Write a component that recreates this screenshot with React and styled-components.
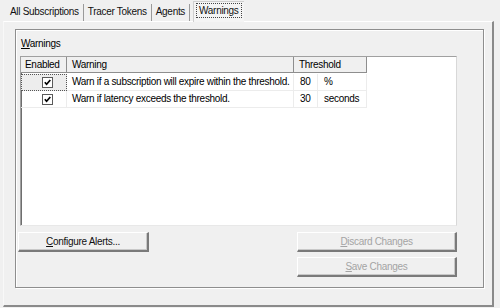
import React from 'react'
import styled, { createGlobalStyle } from 'styled-components'

const GlobalStyle = createGlobalStyle`
  html, body {
    margin: 0;
    padding: 0;
    background: #f0f0f0;
  }
  body {
    font-family: "Liberation Sans", Arial, sans-serif;
    font-size: 10px;
    letter-spacing: -0.3px;
    color: #000;
  }
`;

const Window = styled.div`
  width: 500px;
  height: 308px;
  box-sizing: border-box;
  padding: 4px 6px 5px 3px;
  display: flex;
  flex-direction: column;
  background: #f0f0f0;
  overflow: hidden;
`;

const TabStrip = styled.div`
  display: flex;
  align-items: flex-end;
  height: 18px;
  padding-left: 3px;
`;

const Tab = styled.div`
  height: 17px;
  line-height: 15px;
  padding: 0 4px;
  position: relative;
  color: #111;
  border-right: 1px solid #9a9a9a;
  margin-bottom: 1px;

  &:last-child { border-right: none; }

  ${props => props.active && `
    height: 19px;
    margin-bottom: 0;
    margin-left: 3px;
    padding: 1px 3px 0;
    background: #f4f4f4;
    border: 1px solid #cfcfcf;
    border-right: 2px solid #8a8a8a;
    border-bottom: none;
    z-index: 1;
  `}
`;

const Focus = styled.span`
  display: inline-block;
  padding: 0 2px;
  line-height: 13px;
  outline: 1px dotted #444;
  outline-offset: 0;
`;

const TabPanel = styled.div`
  flex: 1;
  margin-top: -1px;
  border-top: 1px solid #ffffff;
  border-left: 1px solid #f8f8f8;
  border-right: 2px solid #8a8a8a;
  border-bottom: 2px solid #8a8a8a;
  padding: 7px 8px 17px 11px;
  display: flex;
`;

const GroupBox = styled.div`
  flex: 1;
  border: 1px solid #8e8e8e;
  box-shadow: inset 1px 1px 0 #ffffff, 1px 1px 0 #ffffff;
  padding: 7px 26px 10px 4px;
  display: flex;
  flex-direction: column;
`;

const GroupLabel = styled.div`
  height: 15px;
  line-height: 14px;
  margin-left: 1px;
  margin-bottom: 4px;
`;

const U = styled.span`
  text-decoration: underline;
  text-underline-offset: 1px;
`;

const Grid = styled.div`
  height: 168px;
  background: #ffffff;
  border: 1px solid #a0a0a0;
  border-right-color: #d8d8d8;
  border-bottom-color: #e8e8e8;
  box-shadow: inset 1px 1px 0 #6e6e6e;
  display: grid;
  grid-template-columns: 46px 227px 24px 49px 1fr;
  grid-auto-rows: 17px;
  align-content: start;
`;

const HeadCell = styled.div`
  height: 15px;
  line-height: 15px;
  padding-left: ${props => props.pad || 5}px;
  background: ${props => props.blank ? '#ffffff' : '#f0f0f0'};
  border-right: ${props => props.blank ? 'none' : '1px solid #8e8e8e'};
  border-bottom: ${props => props.blank ? 'none' : '1px solid #8e8e8e'};
  grid-column: ${props => props.span ? `span ${props.span}` : 'auto'};
  white-space: nowrap;
`;

const Cell = styled.div`
  line-height: 16px;
  padding-left: ${props => props.pad || 5}px;
  border-right: ${props => props.noRight ? 'none' : '1px solid #ececec'};
  border-bottom: ${props => props.noBottom ? 'none' : '1px solid #ececec'};
  white-space: nowrap;
  overflow: hidden;
  display: flex;
  align-items: center;
  justify-content: ${props => props.center ? 'center' : 'flex-start'};
  background: ${props => props.selected ? '#ededed' : 'transparent'};
  outline: ${props => props.selected ? '1px dotted #555' : 'none'};
  outline-offset: -1px;
`;

const Check = styled.div`
  width: 9px;
  height: 9px;
  border: 1px solid #5a5a5a;
  background: #fff;
  display: flex;
  align-items: center;
  justify-content: center;
  margin-left: 2px;
`;

const Footer = styled.div`
  display: flex;
  justify-content: space-between;
  margin-top: 6px;
  margin-left: -2px;
`;

const ButtonColumn = styled.div`
  display: flex;
  flex-direction: column;
  gap: 5px;
`;

const Button = styled.div`
  width: ${props => props.w}px;
  height: 20px;
  box-sizing: border-box;
  line-height: 18px;
  text-align: center;
  background: #f0f0f0;
  border-top: 1px solid #ffffff;
  border-left: 1px solid #ffffff;
  border-right: 2px solid #7a7a7a;
  border-bottom: 2px solid #7a7a7a;
  box-shadow: inset -1px -1px 0 #c8c8c8;
  color: ${props => props.disabled ? '#a4a4a4' : '#111'};
`;

const CheckMark = () => (
  <svg width="7" height="7" viewBox="0 0 7 7">
    <path d="M0.8 3.2 L2.6 5.2 L6.3 1" fill="none" stroke="#000" strokeWidth="1.7" />
  </svg>
);

const rows = [
  { text: 'Warn if a subscription will expire within the threshold.', value: '80', unit: '%' },
  { text: 'Warn if latency exceeds the threshold.', value: '30', unit: 'seconds' },
];

export default function App() {
  return (
    <>
      <GlobalStyle />
      <Window>
        <TabStrip>
          <Tab>All Subscriptions</Tab>
          <Tab>Tracer Tokens</Tab>
          <Tab>Agents</Tab>
          <Tab active><Focus>Warnings</Focus></Tab>
        </TabStrip>
        <TabPanel>
          <GroupBox>
            <GroupLabel><U>W</U>arnings</GroupLabel>
            <Grid>
              <HeadCell pad={4}>Enabled</HeadCell>
              <HeadCell>Warning</HeadCell>
              <HeadCell span={2}>Threshold</HeadCell>
              <HeadCell blank />
              {rows.map((r, i) => (
                <React.Fragment key={i}>
                  <Cell center selected={i === 0}><Check><CheckMark /></Check></Cell>
                  <Cell>{r.text}</Cell>
                  <Cell pad={6}>{r.value}</Cell>
                  <Cell pad={6}>{r.unit}</Cell>
                  <Cell noRight noBottom />
                </React.Fragment>
              ))}
            </Grid>
            <Footer>
              <Button w={131}><U>C</U>onfigure Alerts...</Button>
              <ButtonColumn>
                <Button w={160} disabled><U>D</U>iscard Changes</Button>
                <Button w={160} disabled><U>S</U>ave Changes</Button>
              </ButtonColumn>
            </Footer>
          </GroupBox>
        </TabPanel>
      </Window>
    </>
  )
}
